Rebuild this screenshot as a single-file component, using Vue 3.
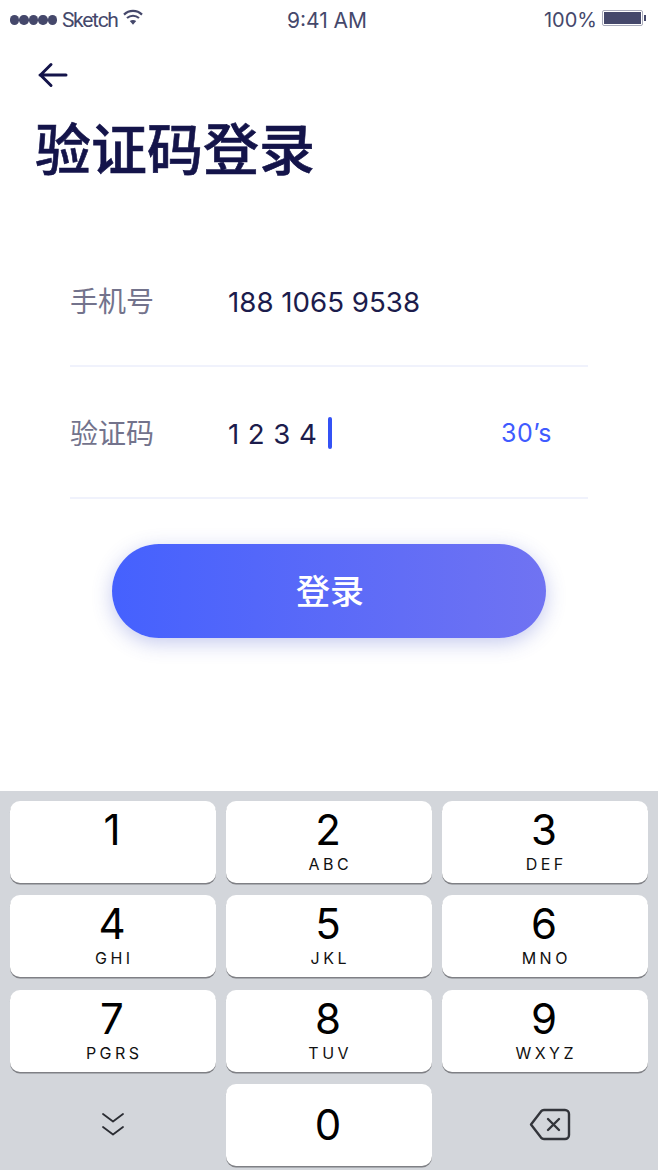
<script setup>
const keys = [
  ['1', ''], ['2', 'ABC'], ['3', 'DEF'],
  ['4', 'GHI'], ['5', 'JKL'], ['6', 'MNO'],
  ['7', 'PGRS'], ['8', 'TUV'], ['9', 'WXYZ'],
]
</script>

<template>
  <div class="page">
    <div class="status">
      <div class="st-left">
        <span class="dots"><i v-for="n in 5" :key="n"></i></span>
        <span class="carrier">Sketch</span>
        <svg class="wifi" width="20" height="17" viewBox="0 0 20 17" fill="none">
          <path d="M1 5.600C6 .6 14 .6 19 5.600" stroke="#45486b" stroke-width="2.200"/>
          <path d="M4 9c3.500-3 8.500-3 12 0" stroke="#45486b" stroke-width="2.200"/>
          <path d="M6.800 12 10 15.800l3.200-3.800c-2-1.500-4.400-1.500-6.400 0Z" fill="#45486b"/>
        </svg>
      </div>
      <div class="st-mid">9:41 AM</div>
      <div class="st-right">
        <span>100%</span>
        <span class="battery"><i></i></span>
        <span class="nub"></span>
      </div>
    </div>

    <button class="back" aria-label="返回">
      <svg width="30" height="26" viewBox="0 0 30 26" fill="none">
        <path d="M2 13h26M13 2.500 2.500 13 13 23.500" stroke="#14144a" stroke-width="3" stroke-linecap="round" stroke-linejoin="round"/>
      </svg>
    </button>

    <h1 class="title">验证码登录</h1>

    <div class="form">
      <div class="row">
        <span class="label">手机号</span>
        <span class="value">188 1065 9538</span>
      </div>
      <div class="row">
        <span class="label">验证码</span>
        <span class="value code">1 2 3 4</span>
        <span class="caret"></span>
        <span class="timer">30’s</span>
      </div>
    </div>

    <button class="login">登录</button>

    <div class="keyboard">
      <div class="grid">
        <div v-for="k in keys" :key="k[0]" class="key">
          <span class="num">{{ k[0] }}</span>
          <span class="sub">{{ k[1] }}</span>
        </div>
        <div class="fn">
          <svg width="24" height="25" viewBox="0 0 24 25" fill="none">
            <path d="M2 2 12 9.500 22 2M2 15 12 22.500 22 15" stroke="#2b2d33" stroke-width="1.800" stroke-linecap="round" stroke-linejoin="round"/>
          </svg>
        </div>
        <div class="key zero">
          <span class="num">0</span>
        </div>
        <div class="fn">
          <svg class="del" width="42" height="33" viewBox="0 0 42 33" fill="none">
            <path d="M15 2h21a4 4 0 0 1 4 4v21a4 4 0 0 1-4 4H15a4 4 0 0 1-3-1.400L2 16.500 12 3.400A4 4 0 0 1 15 2Z" stroke="#33353b" stroke-width="2.400" stroke-linejoin="round"/>
            <path d="M19 11 30 22M30 11 19 22" stroke="#33353b" stroke-width="2.400" stroke-linecap="round"/>
          </svg>
        </div>
      </div>
    </div>
  </div>
</template>

<style>
html, body { margin: 0; background: #fff; }
</style>

<style scoped>
.page {
  width: 658px;
  height: 1170px;
  display: flex;
  flex-direction: column;
  overflow: hidden;
  background: #fff;
  font-family: Inter, "Noto Sans CJK SC", sans-serif;
}
.status {
  height: 40px;
  padding: 0 12px 0 10px;
  display: grid;
  grid-template-columns: 1fr auto 1fr;
  align-items: center;
  font-size: 20px;
  color: #45486b;
}
.st-left { display: flex; align-items: center; gap: 5px; }
.carrier { font-family: Roboto, sans-serif; font-size: 21px; letter-spacing: -1.300px; }
.dots { display: flex; gap: 0; }
.dots i { width: 9.400px; height: 9.400px; border-radius: 50%; background: #45486b; }
.wifi { margin: -5px 0 0 0; }
.st-mid { font-size: 21px; margin-left: -2px; }
.st-right { display: flex; align-items: center; justify-content: flex-end; }
.battery {
  margin-left: 5px;
  width: 41px;
  height: 16px;
  box-sizing: border-box;
  padding: 1px;
  border: 1px solid #a9abbb;
  border-radius: 2px;
  margin-top: -4px;
}
.battery i { display: block; height: 100%; background: #45486b; }
.nub { width: 2px; height: 6px; background: #45486b; margin: -4px 0 0 1px; }
.back {
  align-self: flex-start;
  margin: 22px 0 0 38px;
  padding: 0;
  border: 0;
  background: none;
  display: block;
  height: 26px;
}
.title {
  margin: 26px 0 0 35px;
  font-size: 56px;
  line-height: 72px;
  font-weight: 500;
  -webkit-text-stroke: .6px #14144a;
  color: #14144a;
}
.form { margin: 49px 70px 0 70px; }
.row {
  height: 132px;
  box-sizing: border-box;
  border-bottom: 2px solid #f0f2fc;
  display: flex;
  align-items: center;
}
.label { width: 158px; font-size: 28px; color: #73738c; }
.value { font-size: 27.700px; color: #1c1c4c; margin-top: 4px; }
.code { letter-spacing: .4px; }
.caret { width: 3.500px; height: 32px; background: #3452f5; border-radius: 2px; margin: 2px 0 0 11px; }
.timer { margin: 2px 36px 0 auto; font-size: 25px; letter-spacing: .5px; color: #3f5bff; }
.login {
  align-self: center;
  margin-top: 45px;
  width: 434px;
  height: 94px;
  padding: 0 0 4px 2px;
  border: 0;
  border-radius: 47px;
  background: linear-gradient(90deg, #4561fe 0%, #7073f2 100%);
  box-shadow: 0 5px 20px rgba(63, 80, 200, .3);
  color: #fff;
  font-family: inherit;
  font-size: 34px;
  font-weight: 500;
}
.keyboard {
  margin-top: auto;
  height: 379px;
  box-sizing: border-box;
  background: #d3d6db;
  padding: 10px 10px 4px;
}
.grid {
  display: grid;
  grid-template-columns: repeat(3, 206px);
  grid-auto-rows: 82px;
  column-gap: 10px;
  row-gap: 12.330px;
}
.key {
  background: #fff;
  border-radius: 10px;
  box-shadow: 0 1.500px 0 #7f8085;
  display: flex;
  flex-direction: column;
  align-items: center;
  color: #000;
}
.num { font-size: 42px; line-height: 50px; margin: 4px 0 0 -2px; }
.zero .num { margin-top: 16px; }
.sub { font-size: 16px; line-height: 18px; letter-spacing: 3.500px; margin-right: -2.500px; color: #111; }
.fn { display: flex; align-items: center; justify-content: center; }
.del { margin-left: 10px; }
</style>
